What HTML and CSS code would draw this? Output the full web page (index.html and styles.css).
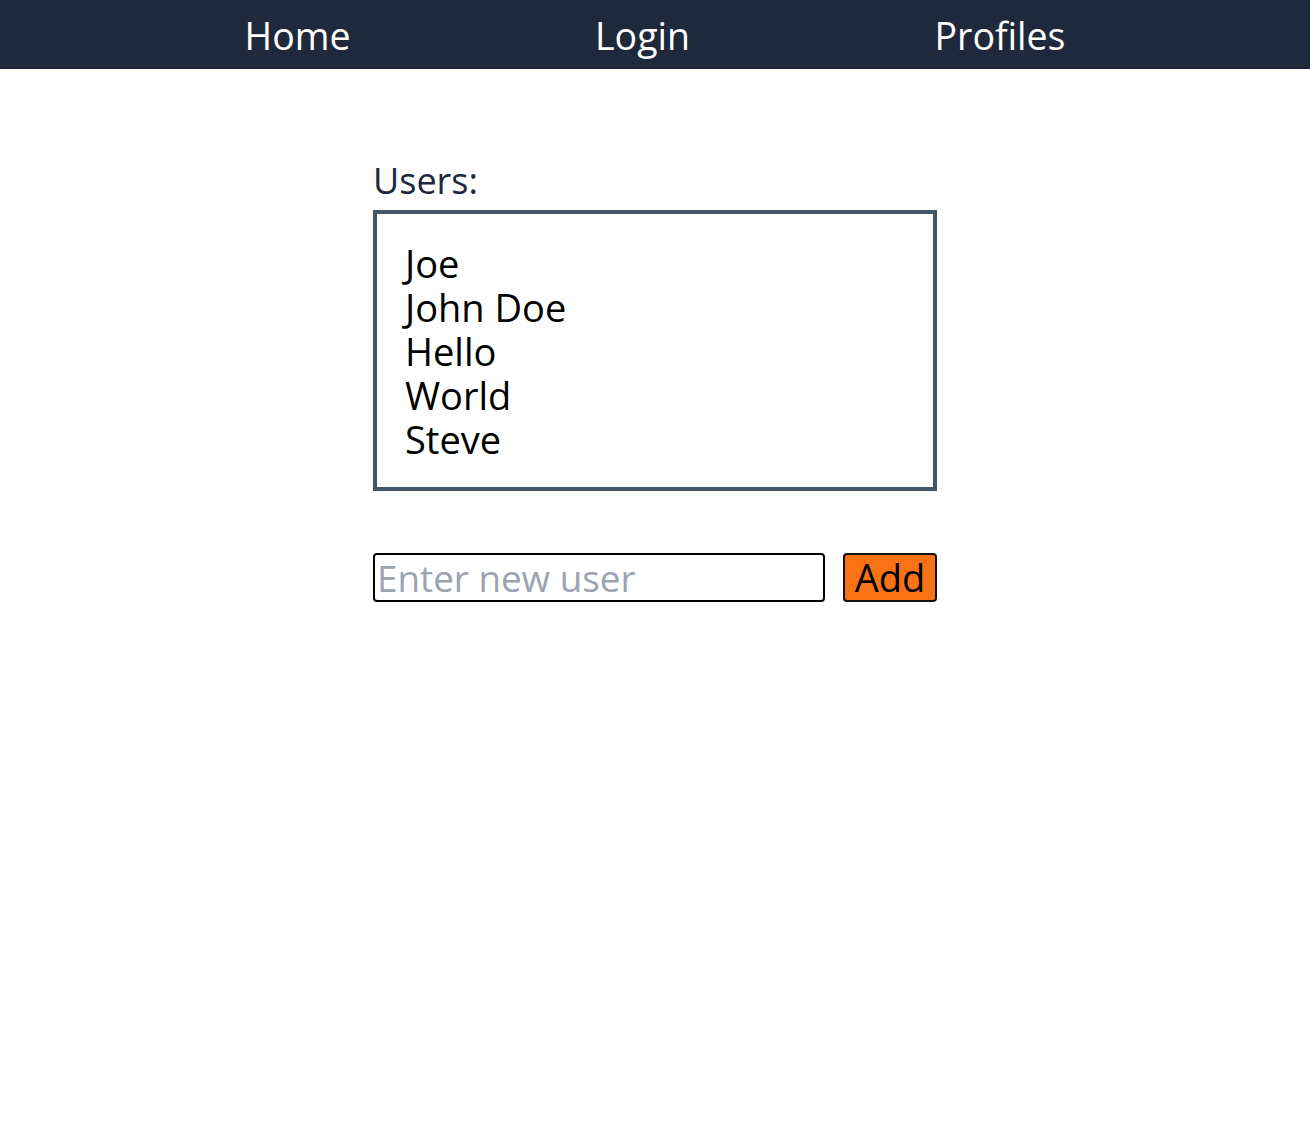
FILE: index.html
```html
<!DOCTYPE html>
<html lang="en">
<head>
<meta charset="utf-8">
<title>Users</title>
<link rel="stylesheet" href="styles.css">
</head>
<body>
<nav class="nav">
  <a class="nav-link" href="#">Home</a>
  <a class="nav-link" href="#">Login</a>
  <a class="nav-link" href="#">Profiles</a>
</nav>
<main class="panel">
  <div class="label">Users:</div>
  <ul class="user-list">
    <li>Joe</li>
    <li>John Doe</li>
    <li>Hello</li>
    <li>World</li>
    <li>Steve</li>
  </ul>
  <form class="add-form">
    <input class="add-input" type="text" placeholder="Enter new user">
    <button class="add-btn" type="button">Add</button>
  </form>
</main>
</body>
</html>
```

FILE: styles.css
```css
* { box-sizing: border-box; }
html, body { margin: 0; padding: 0; background: #ffffff; }
body { font-family: "Open Sans", "Noto Sans", sans-serif; }

.nav {
  height: 69px;
  background: #1e293b;
  display: flex;
  justify-content: space-evenly;
  align-items: center;
}
.nav-link {
  color: #ffffff;
  text-decoration: none;
  font-size: 37.5px;
  line-height: 44px;
  padding-top: 2px;
}

.panel {
  width: 564px;
  margin: 0 auto;
  padding-top: 90px;
}
.label {
  font-size: 36px;
  line-height: 43px;
  color: #1e293b;
  margin-bottom: 8px;
}
.user-list {
  list-style: none;
  margin: 0;
  border: 4px solid #475569;
  padding: 27px 27px 26px 28px;
  font-size: 38px;
  line-height: 44px;
  color: #000000;
}
.add-form {
  display: flex;
  gap: 18px;
  margin-top: 62px;
}
.add-input {
  flex: 1 1 auto;
  min-width: 0;
  width: 452px;
  height: 49px;
  border: 2px solid #000000;
  border-radius: 4px;
  padding: 0 2px;
  font-family: inherit;
  font-size: 36.8px;
  color: #000000;
  outline: none;
}
.add-input::placeholder { color: #9ca3af; }
.add-btn {
  flex: 0 0 94px;
  width: 94px;
  height: 49px;
  background: #f97316;
  border: 2px solid #111111;
  border-radius: 4px;
  padding: 0;
  font-family: inherit;
  font-size: 38px;
  line-height: 45px;
  color: #000000;
}
```
